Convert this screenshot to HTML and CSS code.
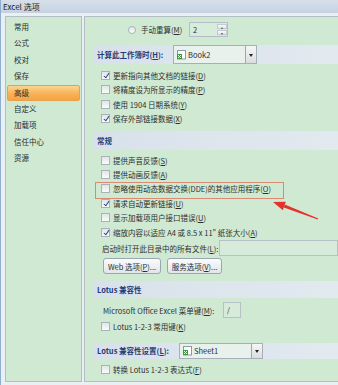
FILE: index.html
```html
<!DOCTYPE html>
<html lang="zh-CN">
<head>
    <meta charset="UTF-8">
    <title>Excel 选项</title>
    <link rel="stylesheet" href="styles.css">
</head>
<body>
    <div class="titlebar">Excel 选项</div>

    <div class="dialog">
        <ul class="nav">
            <li>常用</li>
            <li>公式</li>
            <li>校对</li>
            <li>保存</li>
            <li class="active">高级</li>
            <li>自定义</li>
            <li>加载项</li>
            <li>信任中心</li>
            <li>资源</li>
        </ul>

        <div class="content">
            <div class="calc-row">
                <span class="radio"></span>
                <span class="calc-label">手动重算(<u>M</u>)</span>
                <div class="spinner">
                    <span class="spin-value">2</span>
                    <div class="spin-btns">
                        <span class="spin-up"></span>
                        <span class="spin-down"></span>
                    </div>
                </div>
            </div>

            <div class="band band-tall">
                <span class="band-label calc-label-w">计算此工作簿时(<u>H</u>):</span>
                <div class="select">
                    <svg class="book-icon" width="11" height="11" viewBox="0 0 11 11">
                        <rect x="1.5" y="1.5" width="8" height="8.5" fill="#fff" stroke="#8a9aa8"/>
                        <rect x="1" y="5" width="5" height="5" fill="#3f9a3f"/>
                        <path d="M2 6 L5 9 M5 6 L2 9" stroke="#fff" stroke-width="1"/>
                    </svg>
                    <span class="select-text">Book2</span>
                    <span class="drop"></span>
                </div>
            </div>

            <div class="checks first">
                <div class="check"><span class="box on"></span>更新指向其他文档的链接(<u>D</u>)</div>
                <div class="check"><span class="box"></span>将精度设为所显示的精度(<u>P</u>)</div>
                <div class="check"><span class="box"></span>使用 1904 日期系统(<u>Y</u>)</div>
                <div class="check"><span class="box on"></span>保存外部链接数据(<u>X</u>)</div>
            </div>

            <div class="band band-tall band-general">
                <span class="band-label">常规</span>
            </div>

            <div class="checks second">
                <div class="check"><span class="box"></span>提供声音反馈(<u>S</u>)</div>
                <div class="check"><span class="box"></span>提供动画反馈(<u>A</u>)</div>
                <div class="check marked"><span class="box"></span>忽略使用动态数据交换(DDE)的其他应用程序(<u>O</u>)</div>
                <div class="check"><span class="box on"></span>请求自动更新链接(<u>U</u>)</div>
                <div class="check"><span class="box"></span>显示加载项用户接口错误(<u>U</u>)</div>
                <div class="check"><span class="box on"></span>缩放内容以适应 A4 或 8.5 x 11" 纸张大小(<u>A</u>)</div>
            </div>

            <div class="field-row startup">
                <span class="field-label">启动时打开此目录中的所有文件(<u>L</u>):</span>
                <div class="field wide"></div>
            </div>

            <div class="buttons">
                <button class="btn web">Web 选项(<u>P</u>)...</button>
                <button class="btn service">服务选项(<u>V</u>)...</button>
            </div>

            <div class="band band-lotus">
                <span class="band-label">Lotus 兼容性</span>
            </div>

            <div class="field-row menu-key">
                <span class="field-label">Microsoft Office Excel 菜单键(<u>M</u>):</span>
                <div class="field small">/</div>
            </div>

            <div class="check lotus-keys"><span class="box"></span>Lotus 1-2-3 常用键(<u>K</u>)</div>

            <div class="band band-settings">
                <span class="band-label settings-label-w">Lotus 兼容性设置(<u>L</u>):</span>
                <div class="select">
                    <svg class="book-icon" width="11" height="11" viewBox="0 0 11 11">
                        <rect x="1.5" y="1.5" width="8" height="8.5" fill="#fff" stroke="#8a9aa8"/>
                        <rect x="1" y="5" width="5" height="5" fill="#3f9a3f"/>
                        <path d="M2 6 L5 9 M5 6 L2 9" stroke="#fff" stroke-width="1"/>
                    </svg>
                    <span class="select-text">Sheet1</span>
                    <span class="drop"></span>
                </div>
            </div>

            <div class="check convert"><span class="box"></span>转换 Lotus 1-2-3 表达式(<u>F</u>)</div>
        </div>
    </div>

    <!-- annotation arrow pointing at the marked option -->
    <svg class="arrow" width="338" height="385" viewBox="0 0 338 385">
        <polygon points="284.8,204.6 318.2,218.5 317.8,219.5 283.8,207.4" fill="#e5312b"/>
        <polygon points="273,202 285.8,201.8 282.8,210.2" fill="#e5312b"/>
    </svg>
</body>
</html>
```

FILE: styles.css
```css
* {
    box-sizing: border-box;
}

body {
    margin: 0;
    width: 338px;
    height: 385px;
    overflow: hidden;
    position: relative;
    background-color: #eaeff3;
    font-family: "Noto Sans CJK SC", sans-serif;
    font-size: 7.5px;
    color: #2e2e2e;
}

u {
    text-decoration: underline;
}

.titlebar {
    height: 13px;
    line-height: 13px;
    padding-left: 2px;
    font-size: 8px;
    color: #1c1c1c;
    border-left: 1px solid #8eaecd;
    background: linear-gradient(to bottom, #d6e0ea, #c4d2e0);
}

.dialog {
    display: flex;
    gap: 2px;
    height: 372px;
    padding: 3px 0 3px 4px;
    border-left: 1px solid #8eaecd;
}

/* left navigation */
.nav {
    list-style: none;
    margin: 0;
    width: 77px;
    padding: 2px 1px;
    background-color: #d0e9d2;
    border: 1px solid #b4bec5;
}

.nav li {
    height: 16.4px;
    line-height: 16.4px;
    padding-left: 7px;
    color: #2a2a2a;
}

.nav li.active {
    background: linear-gradient(to bottom, #fcd590, #f8b157 55%, #f5a443);
    border: 1px solid #e7a14d;
    border-radius: 2px;
    padding-left: 6px;
    line-height: 14.4px;
}

/* right options panel */
.content {
    flex: 1;
    padding-top: 4px;
    background-color: #d0e9d2;
    border: 1px solid #b4bec5;
    border-right: none;
}

.calc-row {
    display: flex;
    align-items: center;
    height: 17px;
    padding-left: 43px;
}

.radio {
    width: 8px;
    height: 8px;
    border-radius: 50%;
    border: 1px solid #a9b2ba;
    background: linear-gradient(#e4e7ea, #fbfbfb);
    margin-right: 5px;
}

.calc-label {
    width: 48px;
}

.spinner {
    display: flex;
    width: 39px;
    height: 15px;
    border: 1px solid #b3bec6;
    background-color: #d8ecdb;
}

.spin-value {
    flex: 1;
    padding-left: 3px;
    line-height: 13px;
}

.spin-btns {
    width: 10px;
    display: flex;
    flex-direction: column;
    gap: 1px;
    padding: 1px 0;
}

.spin-up,
.spin-down {
    flex: 1;
    border: 1px solid #c3cad0;
    background: linear-gradient(#f8f9f9, #e4e8eb);
    position: relative;
}

.spin-up::after,
.spin-down::after {
    content: '';
    position: absolute;
    left: 2.5px;
    top: 1.5px;
    border-left: 1.5px solid transparent;
    border-right: 1.5px solid transparent;
}

.spin-up::after {
    border-bottom: 2px solid #555;
}

.spin-down::after {
    border-top: 2px solid #555;
}

/* section header bands */
.band {
    display: flex;
    align-items: center;
    margin-left: 8px;
    padding-left: 4px;
    background: linear-gradient(to right, #d8e1eb, #e2e9ef);
    color: #1f3c74;
    font-weight: bold;
}

.band-tall {
    height: 19px;
    margin-top: 7px;
}

.band-general {
    margin-top: 5px;
}

.band-lotus {
    height: 17px;
    margin-top: 7px;
}

.band-settings {
    height: 16px;
    margin-top: 9px;
}

.calc-label-w {
    width: 76px;
}

.settings-label-w {
    width: 82px;
}

.select {
    display: flex;
    align-items: center;
    width: 84px;
    height: 100%;
    border: 1px solid #a6b0ba;
    background-color: #e9f1ec;
    font-weight: normal;
    color: #2b2b2b;
}

.book-icon {
    margin: 0 1px 0 2px;
}

.select-text {
    flex: 1;
}

.drop {
    width: 11px;
    height: 100%;
    border-left: 1px solid #9ea7b0;
    background: linear-gradient(#f6f6f6, #dadde0);
    position: relative;
}

.drop::after {
    content: '';
    position: absolute;
    left: 2.5px;
    top: 50%;
    margin-top: -1px;
    border-left: 2.5px solid transparent;
    border-right: 2.5px solid transparent;
    border-top: 3px solid #222;
}

/* checkbox rows */
.checks.first {
    margin-top: 4px;
}

.checks.second {
    margin-top: 3px;
}

.check {
    display: flex;
    align-items: center;
    height: 14.4px;
    padding-left: 16px;
    position: relative;
}

.checks.first .check {
    height: 14.5px;
}

.box {
    width: 9px;
    height: 9px;
    margin-right: 3px;
    border: 1px solid #a9b1b9;
    background: linear-gradient(#e2e6e9, #fafafa);
    position: relative;
    flex-shrink: 0;
}

.box.on::after {
    content: '';
    position: absolute;
    left: 2.5px;
    top: 0;
    width: 2px;
    height: 5px;
    border: solid #30498f;
    border-width: 0 1.2px 1.2px 0;
    transform: rotate(35deg);
}

.check.marked::after {
    content: '';
    position: absolute;
    left: 10px;
    top: 0;
    width: 187px;
    height: 15px;
    border: 1.5px solid #d98a73;
}

.lotus-keys {
    margin-top: 1px;
}

.convert {
    margin-top: 4px;
}

/* text fields and buttons */
.field-row {
    display: flex;
    align-items: center;
    height: 16px;
    padding-left: 17px;
}

.startup {
    margin-top: 1px;
}

.startup .field-label {
    width: 117px;
}

.menu-key {
    margin-top: 4px;
    padding-left: 18px;
}

.menu-key .field-label {
    width: 120px;
}

.field {
    height: 16px;
    border: 1px solid #b5c0c7;
    background-color: #d6ebd9;
    line-height: 14px;
    padding-left: 3px;
}

.field.wide {
    flex: 1;
}

.field.small {
    width: 18px;
}

.buttons {
    display: flex;
    gap: 6px;
    margin-top: 2px;
    padding-left: 18px;
}

.btn {
    height: 16px;
    padding: 0;
    font-family: inherit;
    font-size: 7.5px;
    color: #2b2b2b;
    border: 1px solid #9aa6b2;
    border-radius: 3px;
    background: linear-gradient(#fafbfb, #e2e6e9);
}

.btn.web {
    width: 58px;
}

.btn.service {
    width: 55px;
}

.arrow {
    position: absolute;
    left: 0;
    top: 0;
    pointer-events: none;
}
```
